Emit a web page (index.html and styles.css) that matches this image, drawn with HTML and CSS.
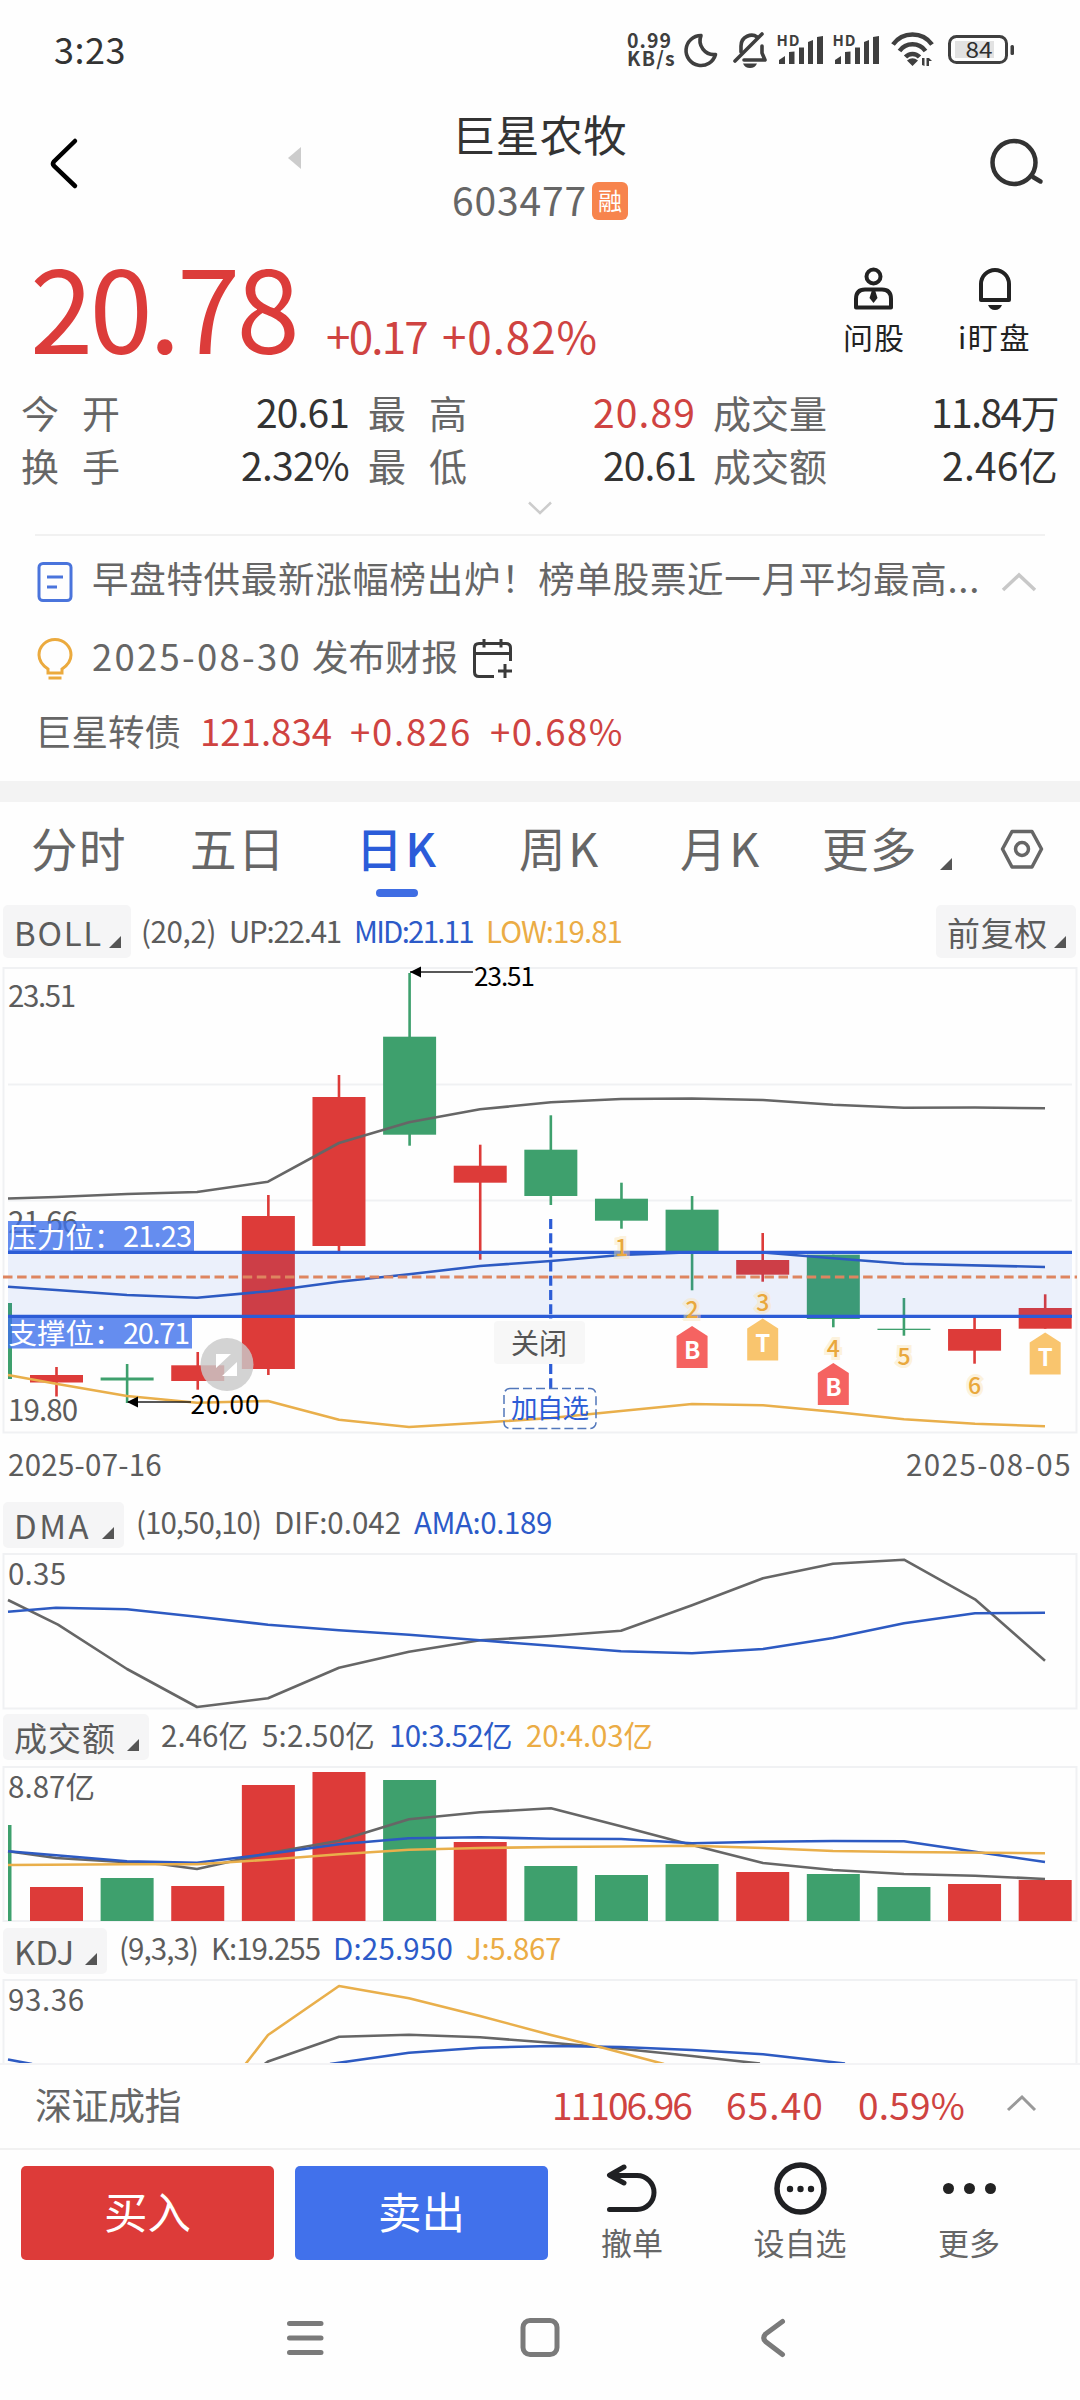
FILE: index.html
```html
<!DOCTYPE html>
<html lang="zh-CN">
<head>
  <meta charset="UTF-8">
  <meta name="viewport" content="width=device-width, initial-scale=1.0">
  <title>巨星农牧 603477</title>
  <link rel="stylesheet" href="styles.css">
</head>
<body>

  <!-- 状态栏 -->
  <div class="status">
    <span class="time" data-w="72">3:23</span>
    <div class="status-right">
      <div class="speed"><span data-w="45">0.99</span><span data-w="49">KB/s</span></div>
      <svg class="status-icons" width="340" height="40" viewBox="683 30 340 40">
        <g fill="none" stroke="#3f3f3f" stroke-width="3.6" stroke-linecap="round" stroke-linejoin="round">
          <path d="M701 35.500A15 15 0 1 0 715.500 54.500A14 14 0 0 1 701 35.500Z"/>
          <path d="M735 61L762 34"/>
          <path d="M741 52V46C741 36 752 33 757 37M762 46V53L765 60H744"/>
          <path d="M893 44.500A24 24 0 0 1 932 44.500M899.500 51A16 16 0 0 1 925.500 51M905.500 57A9.500 9.500 0 0 1 919.500 57" stroke-width="4.500" stroke-linecap="butt"/>
          <rect x="949.500" y="36.500" width="57" height="26" rx="7" stroke-width="3"/>
        </g>
        <g fill="#3f3f3f">
          <path d="M743 63.500H757Q755 68 750 68T743 63.500Z"/>
          <path d="M907 60.500Q912.500 56 918 60.500L912.500 66ZM922 65V58H924.500V66ZM926.500 58H929L932 61H929V66H926.500Z"/>
          <rect x="1010.500" y="45" width="3.500" height="10" rx="1.500"/>
          <g id="bars"><path d="M779 64V60L785 56V64ZM789 52L794.500 51.500V64H789ZM799 47.500H804V64H799ZM808 42L813 40V64H808ZM817 37L823 36V64H817Z"/></g>
          <use href="#bars" x="56"/>
        </g>
        <rect x="955" y="41" width="39" height="17" fill="#e2e2e2"/>
        <g class="svg-bold" fill="#3f3f3f">
          <text x="776.500" y="46" font-size="15" textLength="23">HD</text>
          <text x="832.500" y="46" font-size="15" textLength="23">HD</text>
        </g>
        <text x="965.500" y="57.500" font-size="22" textLength="27" lengthAdjust="spacingAndGlyphs" fill="#2f2f2f">84</text>
      </svg>
    </div>
  </div>

  <!-- 标题栏 -->
  <header class="header">
    <svg class="back" width="36" height="60" viewBox="46 134 36 60"><path d="M75 141L54 161.500Q52 164 54 166L75 186" fill="none" stroke="#000" stroke-width="4.500" stroke-linecap="round"/></svg>
    <svg class="prev" width="14" height="24" viewBox="287 146 14 24"><path d="M301 147V169L288 158Z" fill="#ccc"/></svg>
    <div class="title">
      <h1 data-w="175">巨星农牧</h1>
      <p><span data-w="135">603477</span><i class="tag">融</i></p>
    </div>
    <svg class="search" width="60" height="56" viewBox="986 134 60 56"><g fill="none" stroke="#333" stroke-width="4.500" stroke-linecap="round"><circle cx="1014" cy="162.500" r="21.500"/><path d="M1033 177L1040.500 181.500"/></g></svg>
  </header>

  <!-- 现价 -->
  <section class="quote">
    <strong class="price" data-w="266">20.78</strong>
    <span class="chg" data-w="101">+0.17</span>
    <span class="chg" data-w="156">+0.82%</span>
    <div class="tools">
      <div class="tool">
        <svg width="44" height="46" viewBox="851 266 44 46"><g fill="none" stroke="#222" stroke-width="4"><circle cx="872.500" cy="276.500" r="7"/><path d="M855 307.500V299Q855 289.500 864 289.500H881Q890 289.500 890 299V307.500Z" stroke-linejoin="round"/></g><path d="M871 290H874L876.500 298L872.500 303L868.500 298Z" fill="#222"/></svg>
        <span data-w="62">问股</span>
      </div>
      <div class="tool">
        <svg width="44" height="46" viewBox="973 266 44 46"><path d="M981 300V284A14 14 0 0 1 1009 284V300Z" fill="none" stroke="#222" stroke-width="4" stroke-linejoin="round"/><path d="M988 305H1002Q1000 310 995 310T988 305Z" fill="#222"/></svg>
        <span data-w="73">i盯盘</span>
      </div>
    </div>
  </section>

  <section class="stats">
    <div class="stat"><label>今<b></b>开</label><span data-w="93">20.61</span></div>
    <div class="stat"><label>最<b></b>高</label><span class="up" data-w="103">20.89</span></div>
    <div class="stat"><label>成交量</label><span data-w="127">11.84万</span></div>
    <div class="stat"><label>换<b></b>手</label><span data-w="108">2.32%</span></div>
    <div class="stat"><label>最<b></b>低</label><span data-w="93">20.61</span></div>
    <div class="stat"><label>成交额</label><span data-w="116">2.46亿</span></div>
  </section>
  <div class="expand"><svg width="28" height="18" viewBox="526 499 28 18"><path d="M529 502.500L540 513L551 502.500" fill="none" stroke="#ccc" stroke-width="2.500"/></svg></div>

  <!-- 资讯 -->
  <section class="news">
    <div class="news-row row1">
      <svg width="40" height="46" viewBox="35 559 40 46"><g fill="none" stroke="#4a74dc" stroke-width="3"><rect x="39" y="563.500" width="32" height="37" rx="4"/><path d="M47 577H63M47 587H57"/></g></svg>
      <span data-w="888">早盘特供最新涨幅榜出炉！榜单股票近一月平均最高...</span>
      <svg class="right" width="40" height="24" viewBox="999 569 40 24"><path d="M1003 589L1019 574L1035 589" fill="none" stroke="#c8c8c8" stroke-width="3.500"/></svg>
    </div>
    <div class="news-row row2">
      <svg width="40" height="46" viewBox="35 634 40 46"><path d="M48 671V667Q39 661 39 653A16 15.500 0 0 1 71 653Q71 661 62 667V671ZM48.500 676H61.500" fill="none" stroke="#ebaa3e" stroke-width="3"/></svg>
      <span data-w="210">2025-08-30</span>
      <span class="gap12" data-w="146">发布财报</span>
      <svg class="cal" width="44" height="46" viewBox="472 634 44 46"><path d="M495 674.500H480Q475.500 674.500 475.500 670V646Q475.500 641.500 480 641.500H507Q511.500 641.500 511.500 646V659M476 651.500H511M485 637V645.500M502 637V645.500M506 662V676M499 669H513" fill="none" stroke="#3a3a3a" stroke-width="3"/></svg>
    </div>
    <div class="news-row row3">
      <span data-w="146">巨星转债</span>
      <span class="up m1" data-w="132">121.834</span>
      <span class="up m2" data-w="122">+0.826</span>
      <span class="up m2" data-w="134">+0.68%</span>
    </div>
  </section>
  <div class="band"></div>

  <!-- 周期 -->
  <nav class="tabs">
    <span data-w="96">分时</span>
    <span data-w="96">五日</span>
    <span class="active" data-w="83">日K</span>
    <span data-w="82">周K</span>
    <span data-w="82">月K</span>
    <span data-w="96">更多</span>
    <i class="tri"></i>
    <svg width="46" height="46" viewBox="999 826 46 46"><g fill="none" stroke="#666" stroke-width="3.500" stroke-linejoin="round"><path d="M1002.500 849L1012 831.500H1032L1041.500 849L1032 867H1012Z"/><circle cx="1022" cy="849" r="6.500"/></g></svg>
  </nav>

  <div class="ind main-ind">
    <div class="btn"><span data-w="89">BOLL</span><i class="tri"></i></div>
    <span data-w="75">(20,2)</span>
    <span data-w="112">UP:22.41</span>
    <span class="blue" data-w="119">MID:21.11</span>
    <span class="gold" data-w="136">LOW:19.81</span>
    <div class="btn adj"><span data-w="101">前复权</span><i class="tri"></i></div>
  </div>

  <!-- K线图 -->
  <svg class="chart" width="1080" height="470" viewBox="0 966 1080 470">
    <g class="frame"><rect x="3.500" y="968" width="1073" height="464.500"/><path d="M8 1084.500H1072M8 1200.500H1072"/></g>
    <g class="axis">
      <text x="8" y="1006.500" textLength="68">23.51</text>
      <text x="8" y="1233" textLength="70">21.66</text>
      <text x="8" y="1420.500" textLength="70">19.80</text>
    </g>
    <rect x="8" y="1303" width="4" height="76" fill="#3ea06d"/>
    <g id="candles"></g>
    <rect x="8" y="1252" width="1064" height="64" fill="#2f5fe0" fill-opacity=".09"/>
    <g class="line">
      <polyline class="l-gray" points="8,1198.5 56,1197 127,1194 197,1192 268,1181.700 339,1143 409,1122.300 480,1109.300 551,1102.300 621,1099 692,1098.500 763,1100 833,1104.700 904,1107.700 975,1107.500 1045,1108.300"/>
      <polyline class="l-gold" points="8,1375 56,1383.700 127,1396 197,1402.700 268,1401 339,1419.700 409,1427 480,1422.700 551,1418 621,1411 692,1404 763,1405.300 833,1411.700 904,1419.300 975,1423.700 1045,1426.300"/>
      <polyline class="l-blue" points="8,1286.700 56,1290 127,1295 197,1297.700 268,1291.300 339,1281.700 409,1274.300 480,1266 551,1261 621,1255 692,1252.300 763,1252.500 833,1258.300 904,1263.700 1045,1267"/>
    </g>
    <path d="M3 1277H1077" stroke="#de8560" stroke-width="3" stroke-dasharray="9.500 4.600"/>
    <g fill="#3f70eb" fill-opacity=".8"><rect x="8" y="1221" width="186" height="31"/><rect x="8" y="1317" width="184" height="31.500"/></g>
    <path d="M8 1252.300H1072M8 1316.300H1072" stroke="#2c5cd6" stroke-width="3.200"/>
    <g fill="#fff" font-size="28.500">
      <text x="8.500" y="1247.500">压力位：</text><text x="123" y="1247" textLength="69" font-size="29">21.23</text>
      <text x="8.500" y="1344">支撑位：</text><text x="123" y="1343.500" textLength="67" font-size="29">20.71</text>
    </g>
    <path d="M550.700 1219V1319M550.700 1364V1388" stroke="#2c5cd6" stroke-width="3.200" stroke-dasharray="10 4.200"/>
    <circle cx="227" cy="1364.500" r="26.500" fill="#c9c9c9" fill-opacity=".82"/>
    <path d="M216 1354H231L216 1368ZM237 1362V1376H222Z" fill="#fff"/>
    <g stroke="#222" stroke-width="1.500"><path d="M410 972H473M128 1402H191"/></g>
    <path d="M410 972L421 966.500V977.500ZM127 1402L138 1396.500V1407.500Z"/>
    <g font-size="26"><text x="474" y="986" textLength="61">23.51</text><text x="190.500" y="1414" textLength="69">20.00</text></g>
    <rect x="494" y="1321" width="91" height="43" rx="4" fill="#f7f7f7"/>
    <text x="511" y="1353.500" font-size="28" fill="#555" textLength="56">关闭</text>
    <rect x="504" y="1388.500" width="92" height="40" rx="6" fill="none" stroke="#5277bb" stroke-width="1.500" stroke-dasharray="9 4"/>
    <text x="511" y="1418" font-size="26.500" fill="#2c5cd6" textLength="78">加自选</text>
    <g id="marks"></g>
  </svg>
  <div class="dates"><span data-w="154">2025-07-16</span><span data-w="166">2025-08-05</span></div>

  <div class="ind">
    <div class="btn"><span data-w="77">DMA</span><i class="tri"></i></div>
    <span data-w="125">(10,50,10)</span>
    <span data-w="127">DIF:0.042</span>
    <span class="blue" data-w="138">AMA:0.189</span>
  </div>
  <svg class="chart" width="1080" height="158" viewBox="0 1552 1080 158">
    <rect class="frame" x="3.500" y="1554" width="1073" height="154.500"/>
    <text class="axis" x="8" y="1585" textLength="58">0.35</text>
    <g class="line">
      <polyline class="l-gray" points="8,1600 58,1624.700 127,1669 197,1707 268,1698.300 339,1667.700 409,1651.700 480,1640.300 551,1636 621,1630.700 692,1605.300 763,1578.300 833,1563.700 904,1559.700 975,1599.300 1045,1660.700"/>
      <polyline class="l-blue" points="8,1611.700 56,1607.700 127,1609.300 197,1616.700 268,1624.700 339,1630.300 409,1634.700 480,1640.300 551,1645.700 621,1651.300 692,1653.300 763,1649 833,1638 904,1623.300 975,1613.300 1045,1612.700"/>
    </g>
  </svg>

  <div class="ind">
    <div class="btn"><span data-w="102">成交额</span><i class="tri"></i></div>
    <span class="low" data-w="87">2.46亿</span>
    <span class="low" data-w="113">5:2.50亿</span>
    <span class="low blue" data-w="123">10:3.52亿</span>
    <span class="low gold" data-w="127">20:4.03亿</span>
  </div>
  <svg class="chart" width="1080" height="160" viewBox="0 1764 1080 160">
    <rect class="frame" x="3.500" y="1767" width="1073" height="154"/>
    <text class="axis" x="8" y="1798" textLength="87">8.87亿</text>
    <rect x="8" y="1825" width="3.500" height="96" fill="#3ea06d"/>
    <g id="volumes"></g>
    <g class="line">
      <polyline class="l-gray" points="8,1851.300 56,1858 127,1862.300 160,1864 197,1869 268,1853.300 339,1840.700 409,1819.300 480,1812.300 551,1808.300 621,1826.300 692,1845 763,1863 833,1870 904,1874 975,1875.700 1045,1879"/>
      <polyline class="l-blue" points="8,1851.300 56,1855.300 127,1861.300 197,1862.700 268,1854 339,1844.300 409,1838.300 480,1837.300 551,1838.700 621,1839 692,1843.300 763,1841.700 833,1841 904,1841.300 975,1851.700 1045,1862"/>
      <polyline class="l-gold" points="8,1865 127,1864.300 197,1864.300 268,1859.700 339,1854.300 409,1849.700 480,1848 551,1847 621,1846.500 692,1845.700 763,1848 833,1851 904,1852 1045,1853.300"/>
    </g>
  </svg>

  <div class="ind">
    <div class="btn"><span data-w="60">KDJ</span><i class="tri"></i></div>
    <span data-w="79">(9,3,3)</span>
    <span data-w="109">K:19.255</span>
    <span class="blue" data-w="120">D:25.950</span>
    <span class="gold" data-w="95">J:5.867</span>
  </div>
  <svg class="chart" width="1080" height="85" viewBox="0 1978 1080 85">
    <rect class="frame" x="3.500" y="1980" width="1073" height="100"/>
    <text class="axis" x="8" y="2011" textLength="76">93.36</text>
    <g class="line">
      <polyline class="l-gray" points="262,2066 268,2061.500 339,2036.700 409,2034.700 480,2037.300 551,2042.700 621,2048.700 692,2056 760,2063.500"/>
      <polyline class="l-blue" points="8,2059.500 32,2064"/>
      <polyline class="l-blue" points="330,2064 409,2052.700 480,2047.700 551,2046 621,2047 692,2050 763,2054.300 845,2063.500"/>
      <polyline class="l-gold" points="244,2066 268,2035 339,1986 409,1998.300 480,2016 551,2035 600,2047 664,2064"/>
    </g>
  </svg>

  <!-- 指数 -->
  <div class="index-bar">
    <span data-w="146">深证成指</span>
    <span class="up i1" data-w="139">11106.96</span>
    <span class="up i2" data-w="98">65.40</span>
    <span class="up i3" data-w="107">0.59%</span>
    <svg width="34" height="20" viewBox="1005 2096 34 20"><path d="M1008 2112L1022 2099L1035 2112" fill="none" stroke="#999" stroke-width="3"/></svg>
  </div>

  <!-- 底部操作 -->
  <footer class="actions">
    <button class="buy">买入</button>
    <button class="sell">卖出</button>
    <div class="act">
      <svg width="60" height="56" viewBox="603 2160 60 56"><path d="M610.500 2209.500H638A17 17 0 0 0 638 2175.500H612M625 2167L610.500 2175.200L625 2183" fill="none" stroke="#1f2023" stroke-width="5" stroke-linecap="round" stroke-linejoin="round"/></svg>
      <span>撤单</span>
    </div>
    <div class="act">
      <svg width="60" height="56" viewBox="770 2160 60 56"><circle cx="800.500" cy="2188.500" r="23.500" fill="none" stroke="#1f2023" stroke-width="5.500"/><g fill="#1f2023"><circle cx="790" cy="2189" r="3.200"/><circle cx="800.500" cy="2189" r="3.200"/><circle cx="811" cy="2189" r="3.200"/></g></svg>
      <span>设自选</span>
    </div>
    <div class="act">
      <svg width="60" height="56" viewBox="939 2160 60 56"><g fill="#222"><circle cx="948.500" cy="2188.500" r="5.500"/><circle cx="969.500" cy="2188.500" r="5.500"/><circle cx="990.500" cy="2188.500" r="5.500"/></g></svg>
      <span>更多</span>
    </div>
  </footer>

  <div class="sysnav">
    <svg width="1080" height="60" viewBox="0 2308 1080 60"><g fill="none" stroke="#7a7a7a" stroke-width="5" stroke-linecap="round"><path d="M289.500 2323.500H321M289.500 2338H321M289.500 2352.500H321"/><rect x="523" y="2320.500" width="34" height="34" rx="7"/><path d="M782.500 2321.500L765.500 2334Q762 2338 765.500 2341.500L782.500 2354.500"/></g></svg>
  </div>

  <script src="app.js"></script>
</body>
</html>
```
FILE: styles.css
```css
* {
  box-sizing: border-box;
}
body {
  margin: 0;
  width: 1080px;
  height: 2400px;
  overflow: hidden;
  background: #fefefe;
  color: #333;
  font-family: "Noto Sans CJK SC", sans-serif;
}
svg {
  display: block;
  flex: none;
}
svg text {
  font-family: "Noto Sans CJK SC", sans-serif;
}
h1, p {
  margin: 0;
  font-weight: normal;
}
i {
  font-style: normal;
}
[data-w] {
  display: block;
  flex: none;
  white-space: nowrap;
}
.up {
  color: #cf4341;
}
.blue {
  color: #2c5ac8;
}
.gold {
  color: #ebac45;
}
.tri {
  width: 12px;
  height: 12px;
  background: #555;
  clip-path: polygon(100% 0, 100% 100%, 0 100%);
}

/* 状态栏 */
.status {
  height: 80px;
  padding: 0 57px 0 54px;
  display: flex;
  justify-content: space-between;
}
.time {
  font-size: 36px;
  line-height: 50px;
  padding-top: 23px;
  color: #333;
}
.status-right {
  display: flex;
  padding-top: 30px;
}
.speed {
  width: 56px;
  font-size: 19.5px;
  font-weight: 700;
  line-height: 18px;
  padding-top: 1px;
  color: #3f3f3f;
}
.svg-bold {
  font-weight: 700;
}

/* 标题栏 */
.header {
  height: 160px;
  display: flex;
  align-items: flex-start;
  padding: 0 34px 0 46px;
}
.back {
  margin-top: 54px;
}
.prev {
  margin: 66px 0 0 205px;
}
.title {
  margin-left: 151px;
  width: 181px;
}
.title h1 {
  font-size: 43.5px;
  line-height: 60px;
  margin-top: 24px;
  color: #333;
}
.title p {
  display: flex;
  align-items: center;
  font-size: 39px;
  line-height: 56px;
  margin-top: 7px;
  color: #666;
}
.tag {
  width: 36px;
  height: 38px;
  margin: 3px 0 0 5px;
  border-radius: 6px;
  background: #f7844d;
  color: #fff;
  font-size: 24px;
  line-height: 35px;
  text-align: center;
}
.search {
  margin: 54px 0 0 auto;
}

/* 现价 */
.quote {
  height: 145px;
  padding-left: 30px;
  display: flex;
  align-items: flex-start;
}
.price {
  font-size: 114px;
  font-weight: 400;
  line-height: 130px;
  color: #dc3c3a;
}
.chg {
  font-size: 44px;
  line-height: 60px;
  margin-top: 65px;
  margin-left: 30px;
  color: #cf4341;
}
.chg + .chg {
  margin-left: 15px;
}
.tools {
  margin: 26px 49px 0 auto;
  display: flex;
  gap: 53px;
}
.tool {
  display: flex;
  flex-direction: column;
  align-items: center;
  font-size: 30px;
  line-height: 40px;
  color: #222;
}
.tool span {
  margin-top: 4px;
}
.stats {
  display: grid;
  grid-template-columns: 349px 347px 362px;
  height: 104px;
  font-size: 38px;
  line-height: 53px;
}
.stat {
  display: flex;
  justify-content: space-between;
  padding-left: 19px;
}
.stat:nth-child(3n+1) {
  padding-left: 21px;
}
.stat:nth-child(3n) {
  padding-left: 17px;
}
.stat label {
  color: #666;
}
.stat label b {
  display: inline-block;
  width: 23px;
}
.stat span {
  font-size: 39px;
}
.expand {
  height: 45px;
  padding-top: 10px;
  display: flex;
  justify-content: center;
}

/* 资讯 */
.news {
  margin: 0 35px;
  height: 247px;
  font-size: 36.5px;
  color: #666;
  border-top: 2px solid #f1f1f1;
}
.news-row {
  display: flex;
  align-items: center;
}
.news-row svg + span {
  margin-left: 17px;
}
.news-row .gap12 {
  margin-left: 10px;
}
.row1 {
  height: 83px;
}
.row2 {
  height: 72px;
}
.row3 {
  height: 78px;
}
.row1 svg,
.row2 svg {
  position: relative;
  top: 4px;
}
.news-row .right {
  margin-left: auto;
  margin-right: 6px;
}
.row2 .cal {
  margin-left: 13px;
}
.m1 {
  margin-left: 19px;
}
.m2 {
  margin-left: 18px;
}
.band {
  height: 21px;
  background: #f3f3f3;
}

/* 周期 */
.tabs {
  height: 98px;
  padding: 0 35px 8px 31px;
  display: flex;
  align-items: center;
  font-size: 46.5px;
  line-height: 64px;
  color: #666;
}
.tabs span {
  position: relative;
  margin-right: 63px;
}
.tabs span:nth-child(2) {
  margin-right: 70px;
}
.tabs span:nth-child(3) {
  margin-right: 80px;
}
.tabs span:nth-child(4) {
  margin-right: 79px;
}
.tabs span:nth-child(5) {
  margin-right: 60px;
}
.tabs span:nth-child(6) {
  margin-right: 22px;
}
.tabs .active {
  color: #2b5cd9;
  font-weight: 500;
}
.tabs .active::after {
  content: "";
  position: absolute;
  left: 20px;
  top: 74px;
  width: 42px;
  height: 8px;
  border-radius: 4px;
  background: #3f6de3;
}
.tabs .tri {
  margin-top: 34px;
}
.tabs svg {
  margin-left: auto;
  margin-top: 4px;
}

/* 指标栏 */
.ind {
  height: 54px;
  padding-left: 3px;
  display: flex;
  align-items: flex-start;
  font-size: 29.5px;
  line-height: 46px;
  color: #5c5c5c;
}
.ind > span {
  margin-left: 13px;
}
.ind > .btn + span {
  margin-left: 12px;
}
.ind > .low {
  margin-top: 1px;
  margin-left: 14px;
}
.btn {
  height: 46px;
  margin-top: 4px;
  padding: 0 10px 0 11px;
  display: flex;
  border-radius: 5px;
  background: #f5f5f6;
  font-size: 33px;
  color: #5c5c5c;
}
.btn .tri {
  margin: 25px 0 0 11px;
}
.main-ind {
  height: 66px;
  line-height: 60px;
}
.main-ind > .btn + span {
  margin-left: 10px;
}
.main-ind .btn {
  height: 53px;
  margin-top: 5px;
  line-height: 54px;
}
.main-ind .btn .tri {
  margin: 31px 0 0 6px;
}
.main-ind .adj {
  margin: 5px 4px 0 auto;
}
.chart text {
  white-space: pre;
}
.frame {
  fill: none;
  stroke: #f0f1f3;
  stroke-width: 2;
}
.axis {
  font-size: 29.5px;
  fill: #5c5c5c;
}
.line {
  fill: none;
  stroke-width: 2.6;
  stroke-linejoin: round;
}
.l-gray {
  stroke: #666;
}
.l-blue {
  stroke: #2d5ac2;
}
.l-gold {
  stroke: #e9af4b;
}
.mark-num {
  font-size: 23px;
  font-weight: 500;
  fill: #e9a83c;
  stroke: #fbe3b4;
  stroke-opacity: 0.45;
  stroke-width: 6;
  paint-order: stroke;
  text-anchor: middle;
}
.mark-letter {
  font-size: 24px;
  font-weight: 700;
  fill: #fff;
  text-anchor: middle;
}
.dates {
  height: 62px;
  padding: 0 8px;
  display: flex;
  justify-content: space-between;
  font-size: 29.5px;
  line-height: 55px;
  color: #5c5c5c;
}

/* 指数 */
.index-bar {
  height: 87px;
  padding: 0 41px 5px 35px;
  display: flex;
  align-items: center;
  font-size: 37px;
  color: #666;
  border-top: 2px solid #f3f3f5;
  border-bottom: 2px solid #f1f1f1;
}
.i1 {
  margin-left: auto;
}
.i2 {
  margin-left: 35px;
}
.i3 {
  margin-left: 34px;
}
.index-bar svg {
  margin-left: 40px;
}

/* 底部操作 */
.actions {
  height: 120px;
  padding: 16px 37px 0 21px;
  display: flex;
}
.actions button {
  width: 253px;
  height: 94px;
  margin-right: 21px;
  padding: 0 0 5px;
  border: 0;
  border-radius: 5px;
  color: #fff;
  font-family: inherit;
  font-size: 43.5px;
}
.buy {
  background: #dd3b39;
}
.sell {
  background: #4171eb;
}
.act {
  width: 168px;
  margin-top: -6px;
  display: flex;
  flex-direction: column;
  align-items: center;
  font-size: 31px;
  line-height: 44px;
  color: #666;
}
.act:nth-child(3) {
  width: 126px;
}
.act:nth-child(4) {
  width: 210px;
}
.act:nth-child(5) {
  width: 128px;
}
.act span {
  margin-top: 4px;
}
.sysnav {
  height: 130px;
  padding-top: 38px;
}
```
FILE: app.js
```js
const RED = '#dd3b39';
const GREEN = '#3ea06d';
const START = 56.5;
const STEP = 70.62;
const W = 53;

// [颜色, 实体上, 实体下, 影线上, 影线下]
const candles = [
  [RED, 1375, 1382.5, 1367, 1396.5],
  [GREEN, 1377.5, 1380.5, 1364, 1403],
  [RED, 1365.3, 1381, 1352, 1389.7],
  [RED, 1216, 1369, 1195, 1375],
  [RED, 1097, 1246, 1075, 1252],
  [GREEN, 1036.7, 1134.7, 973, 1145.7],
  [RED, 1165.7, 1182.7, 1144.7, 1259.7],
  [GREEN, 1149.7, 1196, 1115.3, 1205],
  [GREEN, 1198.7, 1220.7, 1182.7, 1228.7],
  [GREEN, 1209.7, 1251.7, 1196, 1290.3],
  [RED, 1260, 1274.7, 1233, 1281.7],
  [GREEN, 1254.7, 1319, 1254.7, 1327.3],
  [GREEN, 1328.7, 1330, 1298, 1335.7],
  [RED, 1329, 1350.7, 1317.3, 1363.7],
  [RED, 1308, 1328.7, 1294.3, 1328.7]
];
const volumes = [1887, 1878, 1886, 1785, 1772, 1780, 1842, 1866, 1875, 1864, 1872, 1874, 1887, 1884, 1880];

// [第几根, 数字, 数字基线, 字母, 标记顶部]
const marks = [
  [8, '1', 1256],
  [9, '2', 1318],
  [10, '3', 1311],
  [11, '4', 1356.5],
  [12, '5', 1364.5],
  [13, '6', 1393.5]
];
const badges = [
  [9, 'B', 1326],
  [10, 'T', 1318.5],
  [11, 'B', 1363],
  [14, 'T', 1332.5]
];

const rect = (x, y, w, h, fill) =>
  `<rect x="${x}" y="${y}" width="${w}" height="${h}" fill="${fill}"/>`;

document.getElementById('candles').innerHTML = candles.map(([c, top, bottom, hi, lo], i) => {
  const x = START + STEP * i;
  return rect(x - 1.3, hi, 2.6, lo - hi, c) + rect(x - W / 2, top, W, bottom - top, c);
}).join('');

document.getElementById('volumes').innerHTML = volumes.map((y, i) =>
  rect(START + STEP * i - W / 2, y, W, 1921 - y, candles[i][0])).join('');

document.getElementById('marks').innerHTML = marks.map(([i, num, base]) =>
  `<text class="mark-num" x="${START + STEP * i}" y="${base}">${num}</text>`
).join('') + badges.map(([i, letter, top]) => {
  const x = START + STEP * i;
  return `<path d="M${x} ${top}L${x + 15.5} ${top + 10}V${top + 42}H${x - 15.5}V${top + 10}Z"
      fill="${letter === 'B' ? '#f56361' : '#f9c56e'}"/>
    <text class="mark-letter" x="${x}" y="${top + 33}">${letter}</text>`;
}).join('');

// 按 data-w 调整字距
document.querySelectorAll('[data-w]').forEach(el => {
  const range = document.createRange();
  range.selectNodeContents(el);
  const natural = range.getBoundingClientRect().width;
  const w = Number(el.dataset.w);
  el.style.letterSpacing = (w - natural) / el.textContent.length + 'px';
  el.style.width = w + 'px';
});
```
